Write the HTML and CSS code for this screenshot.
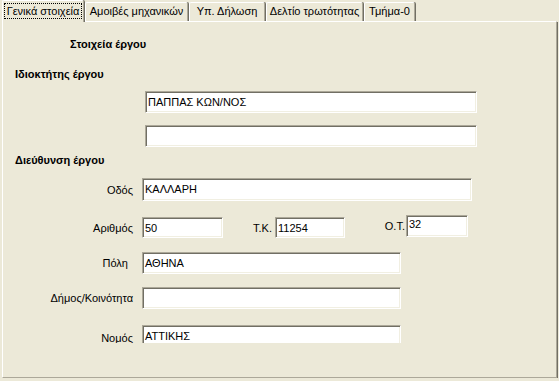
FILE: index.html
```html
<!DOCTYPE html>
<html lang="el">

<head>
    <meta charset="UTF-8">
    <meta name="viewport" content="width=device-width, initial-scale=1.0">
    <title>Στοιχεία έργου</title>
    <link rel="stylesheet" href="styles.css">
</head>

<body>
    <div class="tabs">
        <div class="tab active"><span class="focus">Γενικά στοιχεία</span></div>
        <div class="tab">Αμοιβές μηχανικών</div>
        <div class="tab">Υπ. Δήλωση</div>
        <div class="tab">Δελτίο τρωτότητας</div>
        <div class="tab">Τμήμα-0</div>
    </div>

    <div class="panel">
        <div class="view">
            <div class="title">Στοιχεία έργου</div>

            <div class="section owner">Ιδιοκτήτης έργου</div>
            <div class="row owner-1">
                <div class="field wide">ΠΑΠΠΑΣ ΚΩΝ/ΝΟΣ</div>
            </div>
            <div class="row owner-2">
                <div class="field wide"></div>
            </div>

            <div class="section address">Διεύθυνση έργου</div>
            <div class="row street">
                <label>Οδός</label>
                <div class="field street-box">ΚΑΛΛΑΡΗ</div>
            </div>
            <div class="row number">
                <label>Αριθμός</label>
                <div class="field num-box">50</div>
                <label class="tk">Τ.Κ.</label>
                <div class="field tk-box">11254</div>
                <label class="ot">Ο.Τ.</label>
                <div class="field ot-box">32</div>
            </div>
            <div class="row city">
                <label class="short">Πόλη</label>
                <div class="field mid">ΑΘΗΝΑ</div>
            </div>
            <div class="row municipality">
                <label>Δήμος/Κοινότητα</label>
                <div class="field mid"></div>
            </div>
            <div class="row prefecture">
                <label class="low">Νομός</label>
                <div class="field mid">ΑΤΤΙΚΗΣ</div>
            </div>
        </div>
    </div>
</body>

</html>
```

FILE: styles.css
```css
body {
    margin: 0;
    background-color: #ece9d8;
    font-family: "Liberation Sans", Arial, sans-serif;
    font-size: 11px;
    color: #000;
    overflow: hidden;
}

/* tab strip */
.tabs {
    display: flex;
    align-items: flex-end;
    gap: 1px;
    height: 21px;
    padding-left: 2px;
}

.tab {
    box-sizing: border-box;
    height: 19px;
    line-height: 17px;
    text-align: center;
    white-space: nowrap;
    background-color: #ece9d8;
    border-top: 1px solid #fff;
    border-left: 1px solid #fff;
    border-right: 1px solid #aca899;
    box-shadow: 1px 0 0 #716f64;
    border-radius: 2px 2px 0 0;
}

.tab:nth-child(2) { width: 103px; }
.tab:nth-child(3) { width: 76px; }
.tab:nth-child(4) { width: 97px; }
.tab:nth-child(5) { width: 51px; }

.tab.active {
    position: relative;
    z-index: 1;
    width: 82px;
    height: 22px;
    margin-bottom: -1px;
    padding-top: 2px;
    line-height: 14px;
}

.focus {
    display: inline-block;
    padding: 0 2px;
    border: 1px dotted #000;
}

/* page frame */
.panel {
    box-sizing: border-box;
    width: 555px;
    height: 357px;
    margin-left: 2px;
    border-top: 1px solid #fff;
    border-left: 1px solid #fff;
    border-right: 1px solid #aca899;
    border-bottom: 1px solid #aca899;
    box-shadow: 1px 1px 0 #716f64;
}

.view {
    height: 321px;
    overflow: hidden;
}

.title {
    margin: 15px 0 0 67px;
    line-height: 14px;
    font-weight: bold;
}

.section {
    margin-left: 12px;
    line-height: 14px;
    font-weight: bold;
}

.owner { margin-top: 16px; }
.address { margin-top: 6px; }

/* form rows */
.row {
    display: flex;
    align-items: center;
    height: 22px;
}

.row label {
    width: 130px;
    margin-right: 9px;
    text-align: right;
}

.row label.short { width: 125px; margin-right: 14px; }
.row label.low { padding-top: 3px; }

.owner-1 { margin-top: 10px; }
.owner-2 { margin-top: 12px; }
.street { margin-top: 11px; height: 23px; }
.number { margin-top: 14px; height: 23px; align-items: flex-start; }
.city { margin-top: 14px; }
.municipality { margin-top: 13px; }
.prefecture { margin-top: 16px; }

.number label { line-height: 23px; margin-top: 2px; }

.field {
    box-sizing: border-box;
    height: 22px;
    padding: 1px 0 0 2px;
    line-height: 18px;
    white-space: nowrap;
    background-color: #fff;
    border: 1px solid;
    border-color: #aca899 #fff #fff #aca899;
    box-shadow: inset 1px 1px 0 #716f64, inset -1px -1px 0 #f1efe2;
}

.wide {
    width: 332px;
    margin-left: 142px;
}

.street-box { width: 330px; height: 23px; }
.mid { width: 259px; }

.num-box { width: 81px; height: 21px; margin-top: 2px; }

.number label.tk {
    width: 49px;
    margin-right: 3px;
}

.tk-box { width: 70px; height: 21px; margin-top: 2px; }

.number label.ot {
    width: 60px;
    margin-right: 1px;
    margin-top: 0;
}

.ot-box { width: 62px; line-height: 14px; }
```
